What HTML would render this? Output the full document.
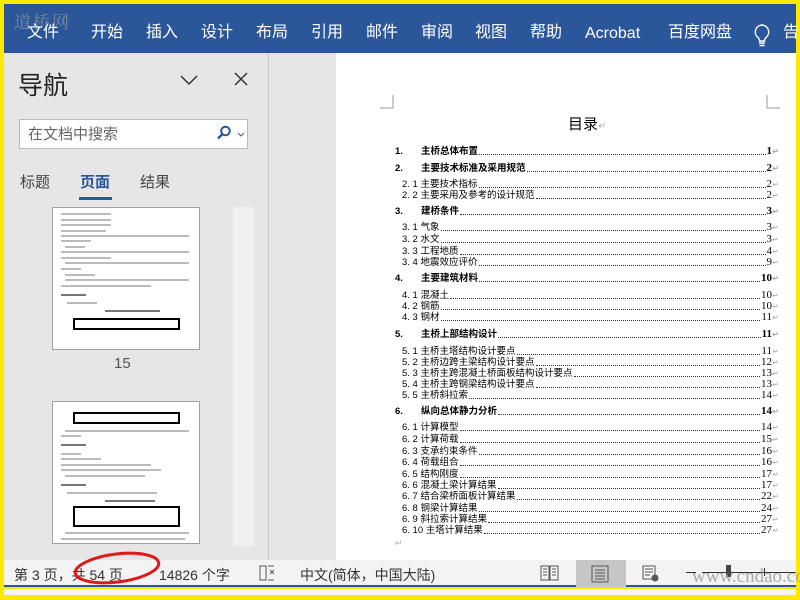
<!DOCTYPE html>
<html><head><meta charset="utf-8"><style>
*{margin:0;padding:0;box-sizing:border-box}
body{width:800px;height:600px;background:#ffe800;position:relative;overflow:hidden;font-family:"Liberation Sans","Noto Sans CJK SC",sans-serif}
.a{position:absolute}
#rib{left:4px;top:4px;width:792px;height:49px;background:#2b579a}
.tab{position:absolute;top:18px;height:22px;line-height:22px;color:#fff;font-size:16px;white-space:nowrap}
#nav{left:4px;top:53px;width:264px;height:507px;background:#e6e6e6}
#gap{left:268px;top:53px;width:68px;height:507px;background:#e6e6e6;border-left:1px solid #c8c8c8}
#page{left:336px;top:53px;width:460px;height:507px;background:#fff}
.row{position:absolute;right:28px;display:flex;align-items:flex-end;font-size:9.5px;line-height:11px;color:#000;white-space:nowrap}
.row .d{flex:1;border-bottom:1px dotted #333;margin:0 1px 2px 1px}
.row .r{font-family:"Liberation Serif",serif;font-size:11px}
.row:after{content:"↵";color:#aaa;font-size:8px;position:absolute;right:-7px;bottom:0}
.b{font-weight:bold}
#status{left:4px;top:560px;width:792px;height:27px;background:#f3f3f3;border-bottom:2px solid #2b579a;font-size:14px;color:#333}
#status span{position:absolute;top:5px;white-space:nowrap}
.thumb{position:absolute;left:52px;width:148px;height:143px;background:#fff;border:1px solid #a0a0a0}
.ln{position:absolute;height:2px;background:#bbb}
</style></head><body>
<div id="rib" class="a">
 <div class="a" style="left:10px;top:4px;color:#8a8f9a;font-family:'Noto Serif CJK SC',serif;font-size:17px;letter-spacing:2px;opacity:.85">道桥网</div>
 <div class="tab" style="left:23px">文件</div>
 <div class="tab" style="left:87px">开始</div>
 <div class="tab" style="left:142px">插入</div>
 <div class="tab" style="left:197px">设计</div>
 <div class="tab" style="left:252px">布局</div>
 <div class="tab" style="left:307px">引用</div>
 <div class="tab" style="left:362px">邮件</div>
 <div class="tab" style="left:417px">审阅</div>
 <div class="tab" style="left:471px">视图</div>
 <div class="tab" style="left:526px">帮助</div>
 <div class="tab" style="left:581px;top:19px">Acrobat</div>
 <div class="tab" style="left:664px">百度网盘</div>
 <svg class="a" style="left:749px;top:20px" width="18" height="24" viewBox="0 0 18 24"><path d="M9 1a7 7 0 0 0-4 12.5c1 1 1.5 2 1.5 3.5h5c0-1.5.5-2.5 1.5-3.5A7 7 0 0 0 9 1z" fill="none" stroke="#fff" stroke-width="1.4"/><path d="M6 19h6M6.5 21.5h5" stroke="#fff" stroke-width="1.4"/></svg>
 <div class="tab" style="left:779px">告</div>
</div>
<div id="nav" class="a">
 <div class="a" style="left:14px;top:13px;font-size:25px;color:#222">导航</div>
 <svg class="a" style="left:176px;top:21px" width="18" height="12"><path d="M1 2l8 8 8-8" fill="none" stroke="#333" stroke-width="1.5"/></svg>
 <svg class="a" style="left:230px;top:19px" width="14" height="14"><path d="M1 1l12 12M13 1L1 13" stroke="#333" stroke-width="1.5"/></svg>
 <div class="a" style="left:15px;top:66px;width:229px;height:30px;background:#fff;border:1px solid #bbb"></div>
 <div class="a" style="left:24px;top:70px;font-size:15px;color:#666">在文档中搜索</div>
 <svg class="a" style="left:212px;top:72px" width="16" height="16"><circle cx="9.5" cy="6" r="4.3" fill="none" stroke="#2b579a" stroke-width="2"/><path d="M6.5 9l-4.5 4.5" stroke="#2b579a" stroke-width="2.4"/></svg>
 <svg class="a" style="left:233px;top:79px" width="8" height="6"><path d="M1 1l3 3 3-3" fill="none" stroke="#555"/></svg>
 <div class="a" style="left:16px;top:118px;font-size:15px;color:#444">标题</div>
 <div class="a" style="left:76px;top:118px;font-size:15px;color:#2b579a;font-weight:bold">页面</div>
 <div class="a" style="left:136px;top:118px;font-size:15px;color:#444">结果</div>
 <div class="a" style="left:75px;top:144px;width:33px;height:3px;background:#2b579a"></div>
 <div class="a" style="left:229px;top:154px;width:21px;height:339px;background:#f0f0f0"></div>
 <div class="a" style="left:110px;top:302px;font-size:15px;color:#555">15</div>
</div>
<div class="thumb" style="top:207px">
 <div class="ln" style="left:8px;top:5px;width:50px"></div><div class="ln" style="left:8px;top:11px;width:50px"></div><div class="ln" style="left:8px;top:16px;width:50px"></div><div class="ln" style="left:8px;top:22px;width:45px"></div>
 <div class="ln" style="left:8px;top:27px;width:128px"></div><div class="ln" style="left:8px;top:32px;width:30px"></div><div class="ln" style="left:12px;top:38px;width:20px"></div>
 <div class="ln" style="left:8px;top:43px;width:128px"></div><div class="ln" style="left:8px;top:49px;width:50px"></div><div class="ln" style="left:12px;top:54px;width:124px"></div><div class="ln" style="left:8px;top:60px;width:20px"></div>
 <div class="ln" style="left:12px;top:66px;width:30px"></div><div class="ln" style="left:12px;top:71px;width:124px"></div><div class="ln" style="left:8px;top:77px;width:90px"></div>
 <div class="ln" style="left:8px;top:86px;width:25px;background:#777"></div><div class="ln" style="left:14px;top:94px;width:30px"></div>
 <div class="ln" style="left:52px;top:102px;width:55px;background:#777"></div>
 <div class="a" style="left:20px;top:110px;width:107px;height:12px;border:2px solid #000"></div>
</div>
<div class="thumb" style="top:401px">
 <div class="a" style="left:20px;top:10px;width:107px;height:12px;border:2px solid #000"></div>
 <div class="ln" style="left:12px;top:28px;width:124px"></div><div class="ln" style="left:8px;top:33px;width:20px"></div>
 <div class="ln" style="left:8px;top:42px;width:25px;background:#777"></div>
 <div class="ln" style="left:8px;top:51px;width:20px"></div><div class="ln" style="left:8px;top:56px;width:40px"></div><div class="ln" style="left:8px;top:62px;width:90px"></div><div class="ln" style="left:8px;top:67px;width:100px"></div><div class="ln" style="left:12px;top:73px;width:80px"></div>
 <div class="ln" style="left:8px;top:82px;width:25px;background:#777"></div><div class="ln" style="left:14px;top:90px;width:90px"></div>
 <div class="ln" style="left:52px;top:98px;width:50px;background:#777"></div>
 <div class="a" style="left:20px;top:104px;width:107px;height:21px;border:2px solid #000"></div>
 <div class="ln" style="left:12px;top:130px;width:124px"></div><div class="ln" style="left:8px;top:136px;width:124px"></div>
</div>
<div id="gap" class="a"></div>
<div id="page" class="a"></div>
<svg class="a" style="left:380px;top:95px" width="400" height="14"><path d="M13 0v13H0M387 0v13h13" fill="none" stroke="#999"/></svg>
<div class="a" style="left:568px;top:113px;font-size:15px;color:#000">目录<span style="color:#aaa;font-size:10px">↵</span></div>
<div class="row b" style="left:395px;top:146px"><span style="width:26px">1.</span>主桥总体布置<span class="d"></span><span class="r">1</span></div>
<div class="row b" style="left:395px;top:163px"><span style="width:26px">2.</span>主要技术标准及采用规范<span class="d"></span><span class="r">2</span></div>
<div class="row" style="left:402px;top:179px">2. 1 主要技术指标<span class="d"></span><span class="r">2</span></div>
<div class="row" style="left:402px;top:190px">2. 2 主要采用及参考的设计规范<span class="d"></span><span class="r">2</span></div>
<div class="row b" style="left:395px;top:206px"><span style="width:26px">3.</span>建桥条件<span class="d"></span><span class="r">3</span></div>
<div class="row" style="left:402px;top:222px">3. 1 气象<span class="d"></span><span class="r">3</span></div>
<div class="row" style="left:402px;top:234px">3. 2 水文<span class="d"></span><span class="r">3</span></div>
<div class="row" style="left:402px;top:246px">3. 3 工程地质<span class="d"></span><span class="r">4</span></div>
<div class="row" style="left:402px;top:257px">3. 4 地震效应评价<span class="d"></span><span class="r">9</span></div>
<div class="row b" style="left:395px;top:273px"><span style="width:26px">4.</span>主要建筑材料<span class="d"></span><span class="r">10</span></div>
<div class="row" style="left:402px;top:290px">4. 1 混凝土<span class="d"></span><span class="r">10</span></div>
<div class="row" style="left:402px;top:301px">4. 2 钢筋<span class="d"></span><span class="r">10</span></div>
<div class="row" style="left:402px;top:312px">4. 3 钢材<span class="d"></span><span class="r">11</span></div>
<div class="row b" style="left:395px;top:329px"><span style="width:26px">5.</span>主桥上部结构设计<span class="d"></span><span class="r">11</span></div>
<div class="row" style="left:402px;top:346px">5. 1 主桥主塔结构设计要点<span class="d"></span><span class="r">11</span></div>
<div class="row" style="left:402px;top:357px">5. 2 主桥边跨主梁结构设计要点<span class="d"></span><span class="r">12</span></div>
<div class="row" style="left:402px;top:368px">5. 3 主桥主跨混凝土桥面板结构设计要点<span class="d"></span><span class="r">13</span></div>
<div class="row" style="left:402px;top:379px">5. 4 主桥主跨钢梁结构设计要点<span class="d"></span><span class="r">13</span></div>
<div class="row" style="left:402px;top:390px">5. 5 主桥斜拉索<span class="d"></span><span class="r">14</span></div>
<div class="row b" style="left:395px;top:406px"><span style="width:26px">6.</span>纵向总体静力分析<span class="d"></span><span class="r">14</span></div>
<div class="row" style="left:402px;top:422px">6. 1 计算模型<span class="d"></span><span class="r">14</span></div>
<div class="row" style="left:402px;top:434px">6. 2 计算荷载<span class="d"></span><span class="r">15</span></div>
<div class="row" style="left:402px;top:446px">6. 3 支承约束条件<span class="d"></span><span class="r">16</span></div>
<div class="row" style="left:402px;top:457px">6. 4 荷载组合<span class="d"></span><span class="r">16</span></div>
<div class="row" style="left:402px;top:469px">6. 5 结构刚度<span class="d"></span><span class="r">17</span></div>
<div class="row" style="left:402px;top:480px">6. 6 混凝土梁计算结果<span class="d"></span><span class="r">17</span></div>
<div class="row" style="left:402px;top:491px">6. 7 结合梁桥面板计算结果<span class="d"></span><span class="r">22</span></div>
<div class="row" style="left:402px;top:503px">6. 8 钢梁计算结果<span class="d"></span><span class="r">24</span></div>
<div class="row" style="left:402px;top:514px">6. 9 斜拉索计算结果<span class="d"></span><span class="r">27</span></div>
<div class="row" style="left:402px;top:525px">6. 10 主塔计算结果<span class="d"></span><span class="r">27</span></div>
<div class="a" style="left:395px;top:538px;color:#aaa;font-size:9px">↵</div>
<div id="status" class="a">
 <span style="left:10px">第 3 页，共 54 页</span>
 <span style="left:155px">14826 个字</span>
 <svg class="a" style="left:254px;top:4px" width="20" height="18"><path d="M2 2h6v14H2zM10 2h6M10 16h6" fill="none" stroke="#555"/><path d="M12 6l4 4M16 6l-4 4" stroke="#555"/></svg>
 <span style="left:296px">中文(简体，中国大陆)</span>
 <svg class="a" style="left:536px;top:5px" width="20" height="16"><path d="M1 1h8v14H1zM10 1h8v14h-8zM3 4h4M3 7h4M3 10h4M12 4h4M12 7h4M12 10h4" fill="none" stroke="#555"/></svg>
 <div class="a" style="left:572px;top:0;width:50px;height:27px;background:#c6c6c6"></div>
 <svg class="a" style="left:587px;top:5px" width="18" height="18"><path d="M1 1h16v16H1zM4 5h10M4 8h10M4 11h10M4 14h10" fill="none" stroke="#555"/></svg>
 <svg class="a" style="left:638px;top:5px" width="18" height="18"><path d="M1 1h12v13H1zM3 4h8M3 7h8M3 10h5" fill="none" stroke="#555"/><circle cx="13" cy="13" r="3.5" fill="#555"/></svg>
 <div class="a" style="left:682px;top:12px;width:10px;height:1px;background:#333"></div>
 <div class="a" style="left:698px;top:12px;width:94px;height:1px;background:#333"></div>
 <div class="a" style="left:722px;top:5px;width:5px;height:12px;background:#444"></div>
 <div class="a" style="left:760px;top:8px;width:1px;height:8px;background:#333"></div>
 <div class="a" style="left:688px;top:6px;font-family:'Liberation Serif',serif;font-size:19px;color:#999;letter-spacing:0;opacity:.8;white-space:nowrap">www.cndao.com</div>
</div>
<div class="a" style="left:4px;top:589px;width:792px;height:6px;background:#f6f6f6"></div>
<svg class="a" style="left:0;top:540px" width="200" height="60"><ellipse cx="117" cy="28" rx="42" ry="14" transform="rotate(-7 117 28)" fill="none" stroke="#e01818" stroke-width="3"/></svg>
</body></html>
